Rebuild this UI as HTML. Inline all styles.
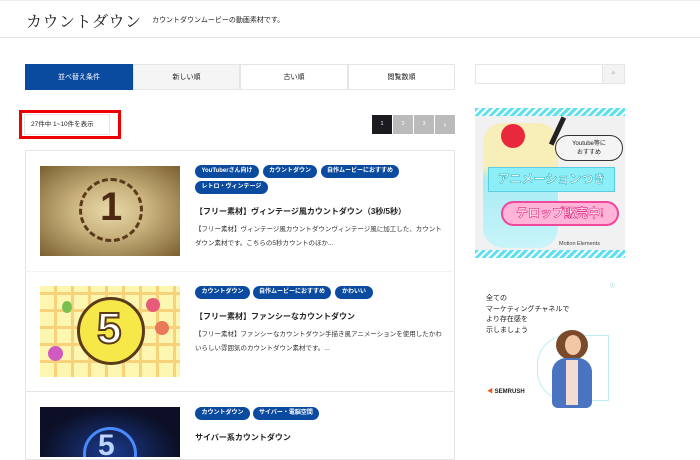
<!DOCTYPE html>
<html><head><meta charset="utf-8"><style>
*{margin:0;padding:0;box-sizing:border-box}
body{width:700px;height:454px;overflow:hidden;background:#fff;font-family:"Liberation Sans","Noto Sans CJK JP",sans-serif;color:#222;position:relative}
.abs{position:absolute}
.hdr{left:0;top:0;width:700px;height:38px;border-bottom:1px solid #e5e5e5;border-top:1px solid #eee}
.tag{position:absolute;background:#0a4a9f;color:#fff;font-size:6px;font-weight:bold;height:13px;line-height:13px;text-align:center;border-radius:7px;white-space:nowrap}
.tabs div{position:absolute;top:0;height:26px;line-height:26px;text-align:center;font-size:7px;border:1px solid #e5e5e5}
.pg div{position:absolute;top:0;width:20px;height:19px;line-height:19px;text-align:center;font-size:5px;color:#fff;background:#bbb}
.ttl{font-size:8px;font-weight:bold;white-space:nowrap}
.desc{font-size:6.5px;line-height:14px;color:#333}
</style></head><body>
<div class="abs hdr"></div>
<div class="abs" style="left:26px;top:9px;font-size:16px;font-family:'Noto Serif CJK SC',serif;letter-spacing:0.5px">カウントダウン</div>
<div class="abs" style="left:152px;top:15px;font-size:7px">カウントダウンムービーの動画素材です。</div>

<div class="abs tabs" style="left:25px;top:64px;width:430px;height:26px">
<div style="left:0;width:108px;background:#0a4a9f;color:#fff;border-color:#0a4a9f">並べ替え条件</div>
<div style="left:108px;width:107px;background:#f5f5f5">新しい順</div>
<div style="left:215px;width:108px">古い順</div>
<div style="left:323px;width:107px">閲覧数順</div>
</div>

<div class="abs" style="left:19px;top:110px;width:102px;height:29px;border:3px solid #e00"></div>
<div class="abs" style="left:24px;top:114px;width:86px;height:21px;border:1px solid #e5e5e5;font-size:6.5px;line-height:20px;padding-left:6px;white-space:nowrap">27件中 1~10件を表示</div>

<div class="abs pg" style="left:372px;top:115px">
<div style="left:0;background:#1a1a1f">1</div><div style="left:21px">2</div><div style="left:42px">3</div><div style="left:63px;font-size:8px">›</div>
</div>

<div class="abs" style="left:25px;top:150px;width:430px;height:310px;border:1px solid #e5e5e5"></div>
<div class="abs" style="left:27px;top:271px;width:426px;border-top:1px dotted #e8e8e8"></div>
<div class="abs" style="left:26px;top:391px;width:428px;border-top:1px solid #e5e5e5"></div>

<!-- item1 -->
<div class="abs" style="left:40px;top:166px;width:140px;height:90px;background:radial-gradient(ellipse at center,#e8d9a8 0%,#c9b27e 40%,#7a5f30 100%)">
<div class="abs" style="left:39px;top:12px;width:64px;height:64px;border-radius:50%;border:3px dashed #5a3a18"></div>
<div class="abs" style="left:60px;top:19px;font-size:40px;font-weight:bold;color:#4a2a10">1</div></div>
<div class="tag" style="left:195px;top:165px;width:64px">YouTuberさん向け</div>
<div class="tag" style="left:263px;top:165px;width:54px">カウントダウン</div>
<div class="tag" style="left:321px;top:165px;width:78px">自作ムービーにおすすめ</div>
<div class="tag" style="left:195px;top:181px;width:73px">レトロ・ヴィンテージ</div>
<div class="abs ttl" style="left:195px;top:206px">【フリー素材】ヴィンテージ風カウントダウン（3秒/5秒）</div>
<div class="abs desc" style="left:195px;top:223px;width:250px">【フリー素材】ヴィンテージ風カウントダウンヴィンテージ風に加工した、カウントダウン素材です。こちらの5秒カウントのほか...</div>

<!-- item2 -->
<div class="abs" style="left:40px;top:286px;width:140px;height:91px;background:repeating-linear-gradient(90deg,transparent 0 14px,#f7d27a 14px 17px),repeating-linear-gradient(0deg,#fdf6b0 0 14px,#f7d27a 14px 17px)">
<div class="abs" style="left:37px;top:11px;width:68px;height:68px;border-radius:50%;background:#f7e84a;border:3px solid #5a3a18"></div>
<div class="abs" style="left:57px;top:18px;font-size:44px;font-weight:bold;color:#fff;-webkit-text-stroke:2px #5a3a18">5</div>
<div class="abs" style="left:106px;top:12px;width:14px;height:14px;border-radius:50%;background:#e85a7a"></div>
<div class="abs" style="left:115px;top:35px;width:14px;height:14px;border-radius:50%;background:#e87a5a"></div>
<div class="abs" style="left:8px;top:60px;width:15px;height:15px;border-radius:50%;background:#d05ac0"></div>
<div class="abs" style="left:22px;top:15px;width:10px;height:12px;border-radius:50%;background:#7ac050"></div></div>
<div class="tag" style="left:195px;top:286px;width:55px">カウントダウン</div>
<div class="tag" style="left:253px;top:286px;width:78px">自作ムービーにおすすめ</div>
<div class="tag" style="left:335px;top:286px;width:38px">かわいい</div>
<div class="abs ttl" style="left:195px;top:311px">【フリー素材】ファンシーなカウントダウン</div>
<div class="abs desc" style="left:195px;top:328px;width:250px">【フリー素材】ファンシーなカウントダウン手描き風アニメーションを使用したかわいらしい雰囲気のカウントダウン素材です。...</div>

<!-- item3 -->
<div class="abs" style="left:40px;top:407px;width:140px;height:50px;background:radial-gradient(ellipse at 50% 90%,#1a3a8a,#0c0f25 70%);overflow:hidden">
<div class="abs" style="left:43px;top:20px;width:54px;height:54px;border-radius:50%;border:3px solid #4a8aff"></div>
<div class="abs" style="left:58px;top:22px;font-size:30px;font-weight:bold;color:#bcd4ff">5</div></div>
<div class="tag" style="left:195px;top:407px;width:55px">カウントダウン</div>
<div class="tag" style="left:253px;top:407px;width:66px">サイバー・電脳空間</div>
<div class="abs ttl" style="left:195px;top:432px">サイバー系カウントダウン</div>

<!-- sidebar -->
<div class="abs" style="left:475px;top:64px;width:150px;height:20px;border:1px solid #e5e5e5"></div>
<div class="abs" style="left:602px;top:64px;width:23px;height:20px;background:#f3f3f3;border:1px solid #e5e5e5;font-size:7px;color:#999;text-align:center;line-height:18px">⌕</div>

<div class="abs" style="left:475px;top:108px;width:150px;height:150px;background:#f1f1f1;overflow:hidden">
<div class="abs" style="left:0;top:0;width:150px;height:8px;background:repeating-linear-gradient(135deg,#5de0f0 0 3px,#fff 3px 5px)"></div>
<div class="abs" style="left:0;top:142px;width:150px;height:8px;background:repeating-linear-gradient(135deg,#5de0f0 0 3px,#fff 3px 5px)"></div>
<div class="abs" style="left:8px;top:15px;width:75px;height:125px;border-radius:20px;background:linear-gradient(#f8eeb8 0,#f8eeb8 35%,#a8ecf4 45%,#c8f4fa 100%)"></div>
<div class="abs" style="left:26px;top:16px;width:24px;height:24px;border-radius:50%;background:#e8283c"></div>
<div class="abs" style="left:80px;top:8px;width:5px;height:30px;background:#222;transform:rotate(25deg)"></div>
<div class="abs" style="left:80px;top:27px;width:68px;height:26px;border:1px solid #333;border-radius:13px;background:#f4f4f4;font-size:6px;text-align:center;line-height:9px;padding-top:4px">Youtube等に<br>おすすめ</div>
<div class="abs" style="left:13px;top:59px;width:127px;height:25px;background:#8ceef6;border:1px solid #5ccde0;color:#fff;font-size:12px;font-weight:bold;text-align:center;line-height:23px;-webkit-text-stroke:.5px #2ab">アニメーションつき</div>
<div class="abs" style="left:26px;top:93px;width:118px;height:25px;background:#ffb4d8;border:2px solid #f0489a;border-radius:13px;color:#fff;font-size:12px;font-weight:bold;text-align:center;line-height:21px;-webkit-text-stroke:.6px #e0207a">テロップ販売中!</div>
<div class="abs" style="left:84px;top:133px;font-size:5.5px;color:#444">Motion Elements</div>
</div>

<div class="abs" style="left:610px;top:282px;font-size:5px;color:#4ab">ⓘ</div>
<div class="abs" style="left:486px;top:294px;font-size:7px;line-height:10.5px;color:#222">全ての<br>マーケティングチャネルで<br>より存在感を<br>示しましょう</div>
<div class="abs" style="left:537px;top:335px;width:72px;height:66px;border:1px solid #bdeef4;border-radius:30px 0 0 30px"></div>
<div class="abs" style="left:556px;top:330px;width:32px;height:30px;border-radius:50%;background:#7a4a2a"></div>
<div class="abs" style="left:565px;top:335px;width:16px;height:20px;border-radius:50%;background:#f0c8a8"></div>
<div class="abs" style="left:552px;top:358px;width:40px;height:50px;border-radius:14px 14px 6px 6px;background:#4a74c0"></div>
<div class="abs" style="left:566px;top:360px;width:12px;height:45px;background:#f4dcd0"></div>
<div class="abs" style="left:487px;top:386px;font-size:6px;font-weight:bold;color:#222"><span style="color:#f05a1e">◀</span> SEMRUSH</div>
</body></html>
